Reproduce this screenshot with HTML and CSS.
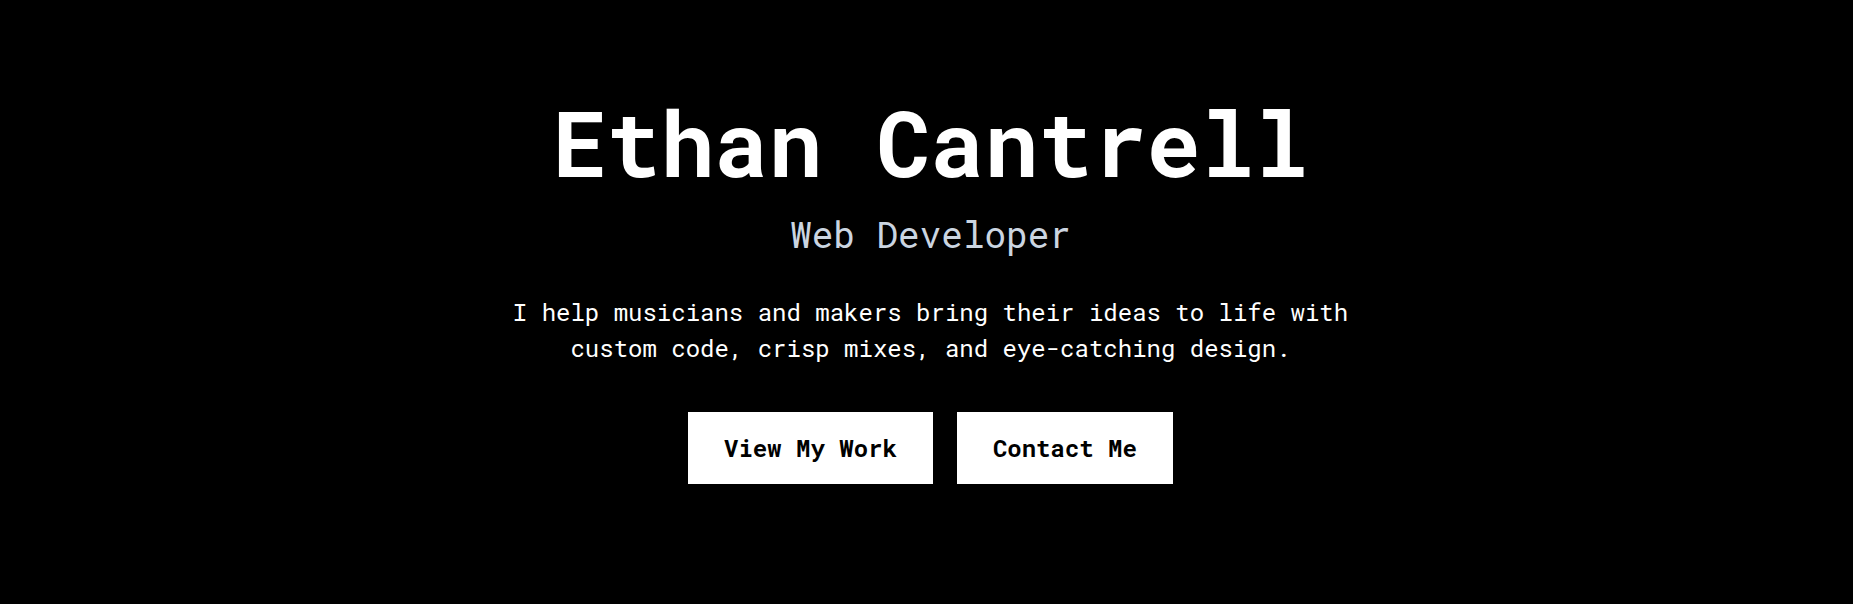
FILE: index.html
```html
<!DOCTYPE html>
<html lang="en">
<head>
<meta charset="utf-8">
<title>Ethan Cantrell</title>
<link rel="stylesheet" href="styles.css">
</head>
<body>
<main class="hero">
  <h1 class="hero-title">Ethan Cantrell</h1>
  <p class="hero-role">Web Developer</p>
  <p class="hero-text">I help musicians and makers bring their ideas to life with custom code, crisp mixes, and eye-catching design.</p>
  <div class="hero-actions">
    <a class="btn" href="#work">View My Work</a>
    <a class="btn" href="#contact">Contact Me</a>
  </div>
</main>
</body>
</html>
```
FILE: styles.css
```css
* { box-sizing: border-box; }
html, body { margin: 0; padding: 0; }
body {
  background: #000;
  color: #fff;
  font-family: "Roboto Mono", "DejaVu Sans Mono", "Liberation Mono", monospace;
  height: 604px;
}
.hero {
  height: 604px;
  padding: 0 0 27px 8px;
  display: flex;
  flex-direction: column;
  align-items: center;
  justify-content: center;
  text-align: center;
}
.hero-title {
  margin: 0;
  font-size: 90px;
  font-weight: 700;
  line-height: 1.1;
}
.hero-role {
  margin: 21px 0 0;
  font-size: 36px;
  line-height: 1.2;
  color: #cbd5e1;
}
.hero-text {
  margin: 37px 0 0;
  max-width: 896px;
  font-size: 24px;
  line-height: 1.5;
}
.hero-actions {
  margin-top: 46px;
  display: flex;
  gap: 24px;
}
.btn {
  display: block;
  background: #fff;
  color: #000;
  text-decoration: none;
  font-weight: 700;
  font-size: 24px;
  line-height: 32px;
  padding: 20px 36px;
}
```
